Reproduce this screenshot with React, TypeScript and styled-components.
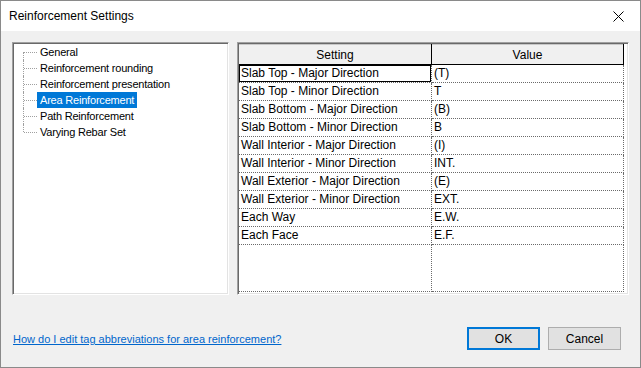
import styled, { createGlobalStyle } from "styled-components";

const GlobalStyle = createGlobalStyle`
  html, body {
    margin: 0;
    padding: 0;
    background: #ffffff;
  }
  body {
    font-family: "Liberation Sans", Arial, sans-serif;
    font-size: 12px;
    color: #000;
  }
`;

const treeItems = [
  "General",
  "Reinforcement rounding",
  "Reinforcement presentation",
  "Area Reinforcement",
  "Path Reinforcement",
  "Varying Rebar Set",
];

const settings = [
  ["Slab Top - Major Direction", "(T)"],
  ["Slab Top - Minor Direction", "T"],
  ["Slab Bottom - Major Direction", "(B)"],
  ["Slab Bottom - Minor Direction", "B"],
  ["Wall Interior - Major Direction", "(I)"],
  ["Wall Interior - Minor Direction", "INT."],
  ["Wall Exterior - Major Direction", "(E)"],
  ["Wall Exterior - Minor Direction", "EXT."],
  ["Each Way", "E.W."],
  ["Each Face", "E.F."],
];

const StyledWindow = styled.div`
  box-sizing: border-box;
  width: 641px;
  height: 368px;
  border: 1px solid #8a8a8a;
  display: flex;
  flex-direction: column;
  background: #f0f0f0;
`;

const StyledTitleBar = styled.div`
  height: 30px;
  background: #fff;
  display: flex;
  align-items: center;
  justify-content: space-between;
  padding: 0 8px 0 8px;
  font-size: 12px;
`;

const StyledClose = styled.button`
  width: 28px;
  height: 22px;
  border: none;
  background: transparent;
  padding: 0;
  display: flex;
  align-items: center;
  justify-content: center;
`;

const StyledBody = styled.div`
  flex: 1;
  display: flex;
  flex-direction: column;
  padding: 11px 11px 0 11px;
`;

const StyledPanels = styled.div`
  display: flex;
  gap: 8px;
  height: 253px;
`;

const StyledSunken = styled.div<{ $width: number }>`
  box-sizing: border-box;
  width: ${(props) => props.$width}px;
  height: 100%;
  background: #fff;
  border: 1px solid;
  border-color: #a0a0a0 #ffffff #ffffff #a0a0a0;
  box-shadow: inset 1px 1px 0 #696969, inset -1px -1px 0 #e3e3e3;
  padding: 1px;
  overflow: hidden;
`;

const StyledTree = styled.ul`
  list-style: none;
  margin: 0;
  padding: 0;
  font-size: 11px;
  letter-spacing: -0.2px;
`;

const StyledTreeItem = styled.li<{ $first: boolean; $last: boolean }>`
  position: relative;
  height: 16px;
  display: flex;
  align-items: center;
  padding-left: 23px;

  &::before {
    content: "";
    position: absolute;
    left: 9px;
    top: ${(props) => (props.$first ? "8px" : "0")};
    height: ${(props) => (props.$last ? "8px" : props.$first ? "8px" : "16px")};
    border-left: 1px dotted #a0a0a0;
  }

  &::after {
    content: "";
    position: absolute;
    left: 10px;
    width: 13px;
    top: 8px;
    border-top: 1px dotted #a0a0a0;
  }
`;

const StyledTreeLabel = styled.span<{ $selected: boolean }>`
  height: 16px;
  line-height: 16px;
  padding: 0 3px 0 3px;
  white-space: nowrap;
  background: ${(props) => (props.$selected ? "#0078d7" : "transparent")};
  color: ${(props) => (props.$selected ? "#fff" : "#000")};
`;

const StyledTable = styled.table`
  border-collapse: collapse;
  width: 385px;
  height: 248px;
  table-layout: fixed;
`;

const StyledHeadCell = styled.th<{ $width?: number }>`
  height: 19px;
  padding: 0;
  font-weight: normal;
  text-align: center;
  background: #f0f0f0;
  border-top: 1px solid #c8c8c8;
  border-bottom: 1px solid #000;
  border-right: 1px solid #000;
  width: ${(props) => (props.$width ? `${props.$width}px` : "auto")};
`;

const StyledCell = styled.td<{ $selected?: boolean }>`
  height: 17px;
  padding: 0 0 0 2px;
  white-space: nowrap;
  overflow: hidden;
  line-height: 17px;
  border-bottom: 1px dotted #6a6a6a;
  border-right: 1px dotted #6a6a6a;
  box-shadow: ${(props) => (props.$selected ? "inset 0 0 0 1px #000" : "none")};
`;

const StyledFillerCell = styled.td`
  padding: 0;
  border-bottom: 1px dotted #6a6a6a;
  border-right: 1px dotted #6a6a6a;
`;

const StyledFooter = styled.div`
  margin-top: 32px;
  display: flex;
  align-items: center;
  justify-content: space-between;
  padding-right: 8px;
`;

const StyledLink = styled.a`
  color: #0066cc;
  text-decoration: underline;
  font-size: 11px;
  padding-left: 1px;
  padding-top: 1px;
  cursor: pointer;
`;

const StyledButtons = styled.div`
  display: flex;
  gap: 8px;
`;

const StyledButton = styled.button<{ $primary?: boolean }>`
  box-sizing: border-box;
  width: 73px;
  height: 23px;
  background: #e1e1e1;
  border: ${(props) =>
    props.$primary ? "2px solid #0078d7" : "1px solid #adadad"};
  font-family: inherit;
  font-size: 12px;
  color: #000;
  padding: 0;
`;

const App = () => {
  return (
    <>
      <GlobalStyle />
      <StyledWindow>
        <StyledTitleBar>
          <span>Reinforcement Settings</span>
          <StyledClose aria-label="Close">
            <svg width="11" height="11" viewBox="0 0 11 11">
              <path d="M0.5 0.5 L10.5 10.5 M10.5 0.5 L0.5 10.5" stroke="#000" strokeWidth="1" />
            </svg>
          </StyledClose>
        </StyledTitleBar>
        <StyledBody>
          <StyledPanels>
            <StyledSunken $width={217}>
              <StyledTree>
                {treeItems.map((item, index) => (
                  <StyledTreeItem
                    key={item}
                    $first={index === 0}
                    $last={index === treeItems.length - 1}
                  >
                    <StyledTreeLabel $selected={item === "Area Reinforcement"}>
                      {item}
                    </StyledTreeLabel>
                  </StyledTreeItem>
                ))}
              </StyledTree>
            </StyledSunken>
            <StyledSunken $width={392}>
              <StyledTable>
                <thead>
                  <tr>
                    <StyledHeadCell $width={192}>Setting</StyledHeadCell>
                    <StyledHeadCell>Value</StyledHeadCell>
                  </tr>
                </thead>
                <tbody>
                  {settings.map(([name, value], index) => (
                    <tr key={name}>
                      <StyledCell $selected={index === 0}>{name}</StyledCell>
                      <StyledCell>{value}</StyledCell>
                    </tr>
                  ))}
                  <tr>
                    <StyledFillerCell />
                    <StyledFillerCell />
                  </tr>
                </tbody>
              </StyledTable>
            </StyledSunken>
          </StyledPanels>
          <StyledFooter>
            <StyledLink>How do I edit tag abbreviations for area reinforcement?</StyledLink>
            <StyledButtons>
              <StyledButton $primary>OK</StyledButton>
              <StyledButton>Cancel</StyledButton>
            </StyledButtons>
          </StyledFooter>
        </StyledBody>
      </StyledWindow>
    </>
  );
};

export default App;
